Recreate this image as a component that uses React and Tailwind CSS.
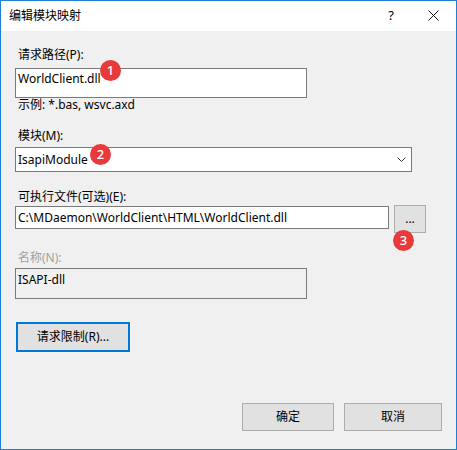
import React from "react";

const font = { fontFamily: '"Noto Sans", "Noto Sans CJK SC", sans-serif' };

// Red numbered marker drawn over the form
function Badge({ n, className }) {
  return (
    <span
      className={`absolute w-[21px] h-[21px] rounded-full bg-[#e8393c] text-white text-[13px] leading-[21px] text-center font-medium ${className}`}
    >
      {n}
    </span>
  );
}

function Label({ children, disabled }) {
  return (
    <div
      className={`ml-[3px] text-[12px] leading-[16px] ${
        disabled ? "text-[#a0a0a0]" : "text-black"
      }`}
    >
      {children}
    </div>
  );
}

export default function App() {
  return (
    <div
      className="w-[457px] h-[450px] border border-[#1e7fd6] flex flex-col bg-[#f0f0f0] select-none"
      style={font}
    >
      {/* Title bar */}
      <div className="h-[30px] bg-white flex items-start shrink-0">
        <div className="ml-[8px] mt-[7px] text-[12px] leading-[16px] text-black">
          编辑模块映射
        </div>
        <div className="ml-auto mt-[6px] text-[13px] leading-[16px] text-black mr-[34px]">
          ?
        </div>
        <svg
          width="11"
          height="11"
          viewBox="0 0 11 11"
          className="mt-[9px] mr-[17px]"
        >
          <path d="M0.5 0.5 L10.5 10.5 M10.5 0.5 L0.5 10.5" stroke="#111" strokeWidth="1" />
        </svg>
      </div>

      {/* Body */}
      <div className="flex-1 flex flex-col pl-[14px] pr-[14px] pt-[16px]">
        <Label>请求路径(P):</Label>
        <div className="relative mt-[5px] w-[292px] h-[30px] border border-[#7a7a7a] bg-white pl-[2px] pt-[2px] text-[12px] leading-[16px] text-black">
          WorldClient.dll
          <Badge n="1" className="left-[84px] top-[-9px]" />
        </div>
        <div className="ml-[3px] text-[12px] leading-[14px] text-black">
          示例: *.bas, wsvc.axd
        </div>

        <div className="mt-[16px]">
          <Label>模块(M):</Label>
        </div>
        <div className="relative mt-[3px] w-[397px] h-[25px] border border-[#7a7a7a] bg-white pl-[2px] flex items-center text-[12px] leading-[16px] text-black">
          IsapiModule
          <svg width="9" height="5" viewBox="0 0 9 5" className="ml-auto mr-[5px]">
            <path d="M0.5 0.5 L4.5 4.5 L8.5 0.5" stroke="#333" strokeWidth="1" fill="none" />
          </svg>
          <Badge n="2" className="left-[74px] top-[-4px]" />
        </div>

        <div className="mt-[17px]">
          <Label>可执行文件(可选)(E):</Label>
        </div>
        <div className="flex items-start">
          <div className="mt-[1px] w-[374px] h-[23px] border border-[#7a7a7a] bg-white pl-[2px] flex items-center text-[12px] leading-[16px] text-black">
            C:\MDaemon\WorldClient\HTML\WorldClient.dll
          </div>
          <div className="relative ml-[5px] w-[32px] h-[28px] border border-[#adadad] bg-[#e1e1e1] flex items-center justify-center text-[12px] leading-[16px] text-black">
            ...
            <Badge n="3" className="left-[-2px] top-[24px]" />
          </div>
        </div>

        <div className="mt-[17px]">
          <Label disabled>名称(N):</Label>
        </div>
        <div className="mt-[2px] w-[292px] h-[31px] border border-[#7a7a7a] bg-[#f0f0f0] pl-[2px] pt-[3px] text-[12px] leading-[16px] text-black">
          ISAPI-dll
        </div>

        <button className="mt-[23px] ml-[1px] w-[114px] h-[30px] border-2 border-[#0078d7] bg-[#e1e1e1] text-[12px] leading-[16px] text-black">
          请求限制(R)...
        </button>

        <div className="mt-[51px] flex justify-end gap-[10px]">
          <button className="w-[92px] h-[28px] border border-[#adadad] bg-[#e1e1e1] text-[12px] leading-[16px] text-black">
            确定
          </button>
          <button className="w-[98px] h-[28px] border border-[#adadad] bg-[#e1e1e1] text-[12px] leading-[16px] text-black">
            取消
          </button>
        </div>
      </div>
    </div>
  );
}
